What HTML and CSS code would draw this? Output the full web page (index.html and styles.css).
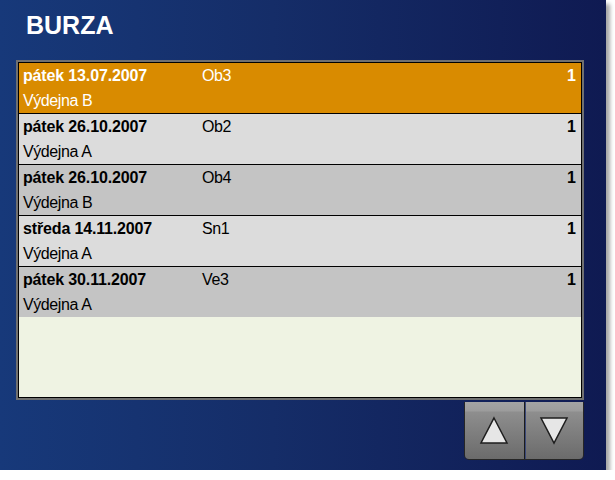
FILE: index.html
```html
<!DOCTYPE html>
<html lang="cs">
<head>
    <meta charset="UTF-8">
    <meta name="viewport" content="width=device-width, initial-scale=1.0">
    <title>Burza</title>
    <link rel="stylesheet" href="styles.css">
</head>
<body>
    <div class="window">
        <h1 class="title">BURZA</h1>

        <div class="list">
            <div class="list-inner">
                <div class="row row-selected">
                    <span class="date">pátek 13.07.2007</span>
                    <span class="code">Ob3</span>
                    <span class="count">1</span>
                    <span class="place">Výdejna B</span>
                </div>
                <div class="row row-light">
                    <span class="date">pátek 26.10.2007</span>
                    <span class="code">Ob2</span>
                    <span class="count">1</span>
                    <span class="place">Výdejna A</span>
                </div>
                <div class="row row-dark">
                    <span class="date">pátek 26.10.2007</span>
                    <span class="code">Ob4</span>
                    <span class="count">1</span>
                    <span class="place">Výdejna B</span>
                </div>
                <div class="row row-light">
                    <span class="date">středa 14.11.2007</span>
                    <span class="code">Sn1</span>
                    <span class="count">1</span>
                    <span class="place">Výdejna A</span>
                </div>
                <div class="row row-dark">
                    <span class="date">pátek 30.11.2007</span>
                    <span class="code">Ve3</span>
                    <span class="count">1</span>
                    <span class="place">Výdejna A</span>
                </div>
            </div>
        </div>

        <div class="pager">
            <button class="pager-btn" type="button" aria-label="nahoru">
                <svg width="30" height="29" viewBox="0 0 30 29">
                    <polygon points="15,2 28,27 2,27" fill="#e6e6e6" stroke="#1e1e1e" stroke-width="1.5" stroke-linejoin="miter"/>
                </svg>
            </button>
            <button class="pager-btn" type="button" aria-label="dolů">
                <svg width="30" height="29" viewBox="0 0 30 29">
                    <polygon points="2,2 28,2 15,27" fill="#e6e6e6" stroke="#1e1e1e" stroke-width="1.5" stroke-linejoin="miter"/>
                </svg>
            </button>
        </div>
    </div>
</body>
</html>
```

FILE: styles.css
```css
body {
    margin: 0;
    padding: 0;
    background-color: #fff;
    font-family: "Liberation Sans", Arial, sans-serif;
}
.window {
    width: 606px;
    height: 470px;
    box-sizing: border-box;
    padding: 10px 0 0 16px;
    background: linear-gradient(to right, #17397a 0%, #152d68 45%, #0f1a52 100%);
    box-shadow: 4px 4px 4px rgba(0, 0, 0, 0.35);
}
.title {
    margin: 0 0 20px 10px;
    font-size: 25px;
    line-height: 30px;
    font-weight: bold;
    color: #fff;
}
.list {
    width: 568px;
    height: 340px;
    box-sizing: border-box;
    border: 2px solid #707070;
}
.list-inner {
    height: 100%;
    box-sizing: border-box;
    border: 1px solid #000;
    background-color: #eff3e3;
}
.row {
    display: grid;
    grid-template-columns: 179px 1fr auto;
    height: 50px;
    box-sizing: border-box;
    padding: 0 5px 0 4px;
    color: #000;
    font-size: 16px;
    line-height: 25px;
}
.row + .row {
    height: 51px;
    border-top: 1px solid #000;
}
.row-selected {
    background-color: #d98b00;
    color: #fff;
}
.row-light {
    background-color: #dcdcdc;
}
.row-dark {
    background-color: #c4c4c4;
}
.date {
    font-weight: bold;
    letter-spacing: -0.15px;
}
.code {
    letter-spacing: -0.4px;
}
.count {
    font-weight: bold;
    text-align: right;
}
.place {
    grid-column: 1 / 4;
    letter-spacing: -0.4px;
}
.pager {
    display: flex;
    width: 120px;
    height: 58px;
    box-sizing: border-box;
    margin: 2px 0 0 448px;
    border: 1px solid #262626;
    border-top: none;
    border-radius: 0 0 5px 5px;
    overflow: hidden;
}
.pager-btn {
    flex: 1;
    display: flex;
    align-items: center;
    justify-content: center;
    padding: 0;
    border: none;
    background: linear-gradient(#a4a4a4 0, #9c9c9c 9px, #8e8e8e 10px, #6b6b6b 100%);
    cursor: pointer;
}
.pager-btn + .pager-btn {
    border-left: 1px solid #1c1c1c;
    box-shadow: inset 1px 0 0 #3c4a7a;
}
```
